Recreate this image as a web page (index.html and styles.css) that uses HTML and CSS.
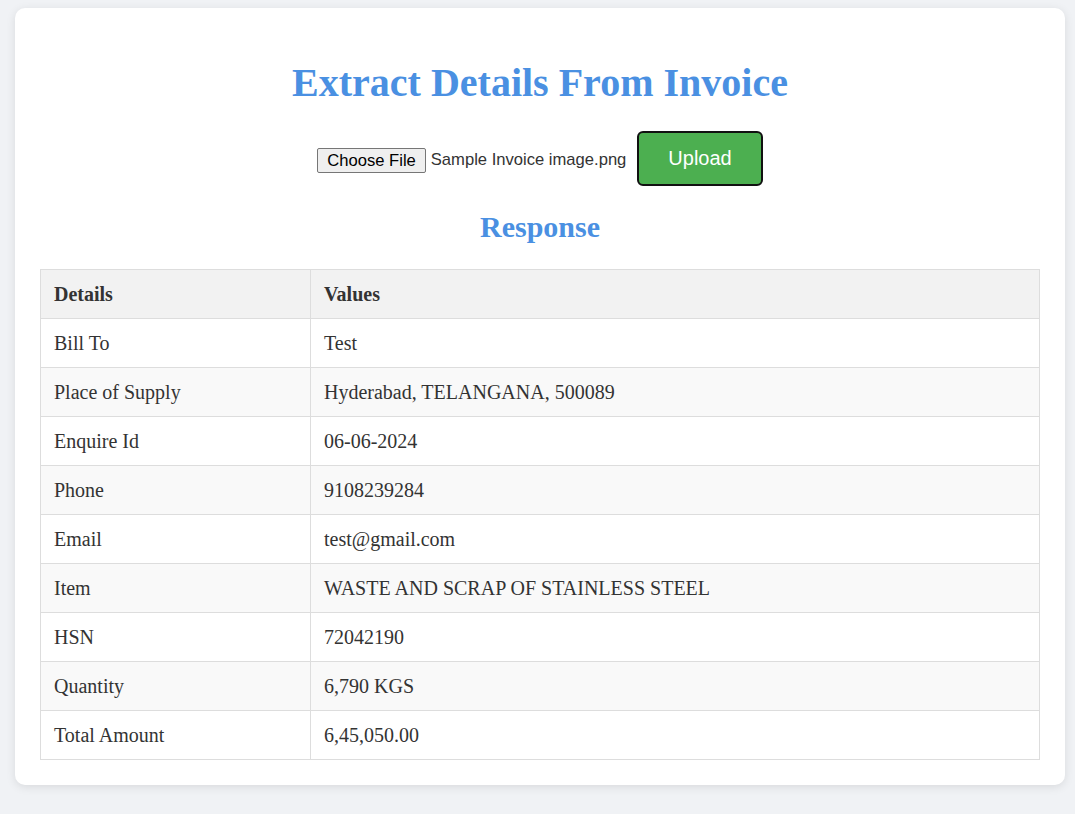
FILE: index.html
```html
<!DOCTYPE html>
<html>
<head>
<meta charset="utf-8">
<link rel="stylesheet" href="styles.css">
</head>
<body>
<div class="card">
  <h1 class="title">Extract Details From Invoice</h1>
  <form class="upload-row">
    <span class="file-field">
      <span class="file-btn">Choose File</span>
      <span class="file-name">Sample Invoice image.png</span>
    </span>
    <button type="button" class="upload-btn">Upload</button>
  </form>
  <h2 class="subtitle">Response</h2>
  <table class="data">
    <colgroup><col class="col-key"><col class="col-val"></colgroup>
    <thead>
      <tr><th>Details</th><th>Values</th></tr>
    </thead>
    <tbody>
      <tr><td>Bill To</td><td>Test</td></tr>
      <tr><td>Place of Supply</td><td>Hyderabad, TELANGANA, 500089</td></tr>
      <tr><td>Enquire Id</td><td>06-06-2024</td></tr>
      <tr><td>Phone</td><td>9108239284</td></tr>
      <tr><td>Email</td><td>test@gmail.com</td></tr>
      <tr><td>Item</td><td>WASTE AND SCRAP OF STAINLESS STEEL</td></tr>
      <tr><td>HSN</td><td>72042190</td></tr>
      <tr><td>Quantity</td><td>6,790 KGS</td></tr>
      <tr><td>Total Amount</td><td>6,45,050.00</td></tr>
    </tbody>
  </table>
</div>
</body>
</html>
```
FILE: styles.css
```css
html, body {
  margin: 0;
  padding: 0;
}
body {
  background: #f0f2f5;
  font-family: "Liberation Serif", "Times New Roman", serif;
  color: #333;
  padding: 8px 10px 29px 15px;
}
.card {
  background: #fff;
  border-radius: 10px;
  box-shadow: 0 2px 10px rgba(0, 0, 0, 0.1);
  padding: 25px;
}
.title {
  margin: 27px 0 0;
  font-size: 40px;
  font-weight: bold;
  color: #4a90e2;
  text-align: center;
  line-height: 46px;
}
.upload-row {
  margin: 25px 0 0;
  display: flex;
  justify-content: center;
  align-items: center;
  gap: 11px;
}
.file-field {
  display: flex;
  align-items: center;
  gap: 5px;
  font-family: "Liberation Sans", Arial, sans-serif;
  font-size: 16.6px;
  color: #333;
  padding-top: 3px;
}
.file-btn {
  background: #efefef;
  border: 1px solid #767676;
  border-radius: 2px;
  padding: 3px 9px 2px;
  color: #000;
  line-height: 18px;
}
.upload-btn {
  background: #4caf50;
  color: #fff;
  border: 2px solid #111;
  border-radius: 6px;
  padding: 14px 29px;
  font-family: "Liberation Sans", Arial, sans-serif;
  font-size: 20px;
  line-height: 23px;
}
.subtitle {
  margin: 24px 0 0;
  font-size: 30px;
  font-weight: bold;
  color: #4a90e2;
  text-align: center;
  line-height: 34px;
}
.data {
  margin-top: 25px;
  width: 100%;
  border-collapse: collapse;
  table-layout: fixed;
  font-size: 20px;
}
.col-key { width: 270px; }
.data th, .data td {
  border: 1px solid #ddd;
  padding: 13px;
  text-align: left;
  line-height: 22px;
}
.data th {
  background: #f2f2f2;
  font-weight: bold;
}
.data tbody tr:nth-child(even) {
  background: #f9f9f9;
}
```
